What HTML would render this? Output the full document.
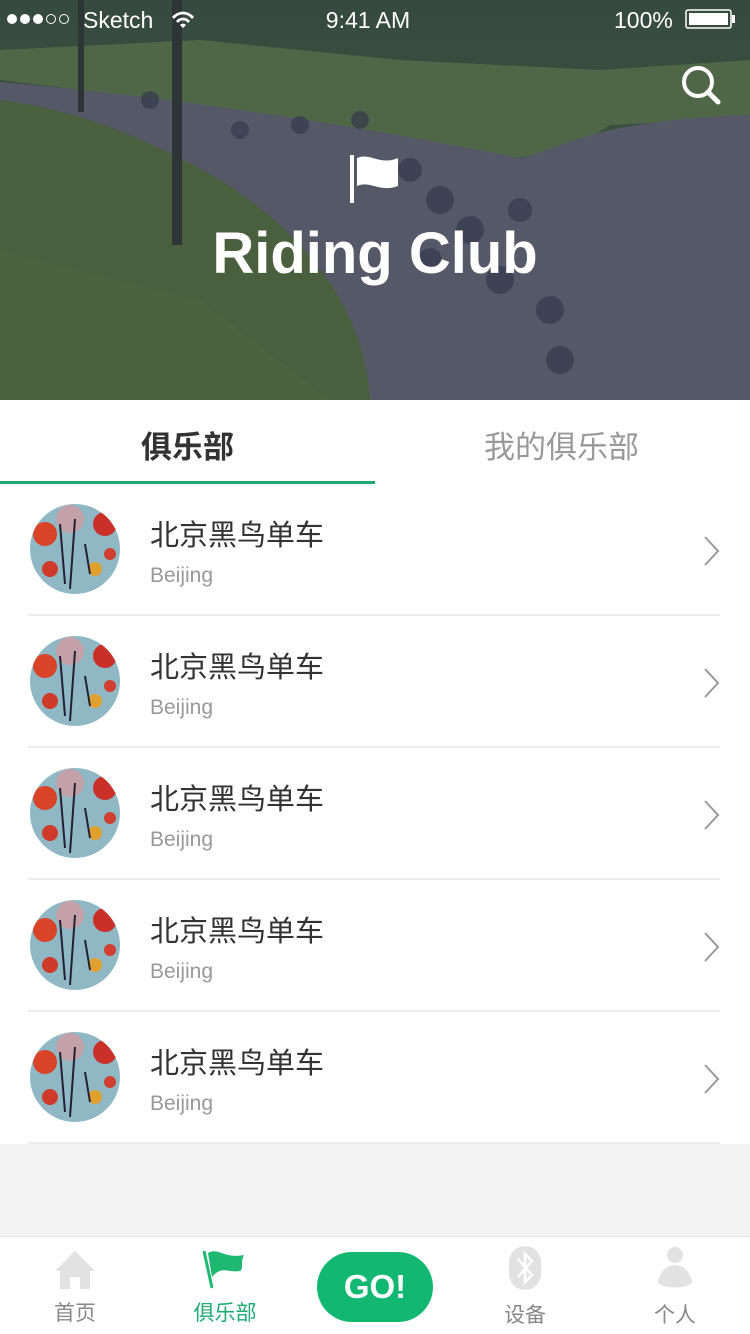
<!DOCTYPE html>
<html><head><meta charset="utf-8"><style>
*{margin:0;padding:0;box-sizing:border-box}
body{width:750px;height:1334px;background:#f4f4f4;font-family:"Liberation Sans","Noto Sans CJK SC",sans-serif;position:relative;overflow:hidden}
.hdr{position:absolute;left:0;top:0;width:750px;height:400px}
.tabs{position:absolute;top:400px;left:0;width:750px;height:84px;background:#fff}
.tab{position:absolute;top:22px;font-size:31px}
.row{position:absolute;left:0;width:750px;height:132px;background:#fff}
.row .sep{position:absolute;left:28px;right:30px;bottom:0;height:2px;background:#ececec}
.av{position:absolute;left:30px;top:20px;width:90px;height:90px;border-radius:50%;overflow:hidden}
.nm{position:absolute;left:150px;top:28px;font-size:29px;color:#333}
.sub{position:absolute;left:150px;top:80px;font-size:21px;color:#999}
.chev{position:absolute;left:700px;top:50px}
.bar{position:absolute;left:0;top:1236px;width:750px;height:98px;background:#fff;border-top:1px solid #e6e6e6}
.lbl{position:absolute;top:60px;font-size:21px;color:#888;width:100px;text-align:center}
</style></head><body>
<svg class="hdr" viewBox="0 0 750 400">
<defs>
<linearGradient id="tr" x1="0" y1="0" x2="0" y2="1"><stop offset="0" stop-color="#364a40"/><stop offset="1" stop-color="#43593f"/></linearGradient>
</defs>
<rect width="750" height="400" fill="url(#tr)"/>
<path d="M0 80 L200 105 L500 160 L570 150 L610 125 L750 118 L750 60 L600 70 L400 60 L200 40 L0 50Z" fill="#4f6746"/>
<path d="M0 82 C150 95 330 120 520 158 C560 150 590 120 750 115 L750 400 L370 400 C365 330 330 250 220 180 C150 140 80 110 0 100Z" fill="#555867"/>
<path d="M0 100 C80 110 150 140 220 180 C330 250 365 330 370 400 L0 400Z" fill="#4a5f3e"/>
<path d="M0 250 L200 300 L330 400 L0 400Z" fill="#4c663f" opacity=".6"/>
<rect x="172" y="0" width="10" height="245" fill="#2e3536"/>
<rect x="78" y="0" width="6" height="112" fill="#2e3536"/>
<g fill="#343a4e" opacity=".7"><circle cx="150" cy="100" r="9"/><circle cx="240" cy="130" r="9"/><circle cx="300" cy="125" r="9"/><circle cx="360" cy="120" r="9"/><circle cx="410" cy="170" r="12"/><circle cx="440" cy="200" r="14"/><circle cx="470" cy="230" r="14"/><circle cx="500" cy="280" r="14"/><circle cx="550" cy="310" r="14"/><circle cx="560" cy="360" r="14"/><circle cx="430" cy="260" r="12"/><circle cx="520" cy="210" r="12"/></g>
<rect x="350" y="155" width="4" height="48" fill="#fff"/>
<path d="M357 158 C370 152 380 166 398 158 L398 186 C380 193 370 180 357 186Z" fill="#fff"/>
<text x="375" y="273" text-anchor="middle" font-family="Liberation Sans" font-weight="bold" font-size="58" fill="#fff">Riding Club</text>
<circle cx="698" cy="82" r="14" fill="none" stroke="#fff" stroke-width="4"/>
<line x1="708" y1="92" x2="718" y2="102" stroke="#fff" stroke-width="5" stroke-linecap="round"/>
<g fill="#fff" font-family="Liberation Sans" font-size="23">
<circle cx="12" cy="19" r="5"/><circle cx="25" cy="19" r="5"/><circle cx="38" cy="19" r="5"/>
<circle cx="51" cy="19" r="4.5" fill="none" stroke="#fff" stroke-width="1"/><circle cx="64" cy="19" r="4.5" fill="none" stroke="#fff" stroke-width="1"/>
<text x="83" y="28">Sketch</text>
<path d="M172 17 a14 14 0 0 1 22 0 l-2 2 a11 11 0 0 0 -18 0z M176 21 a9 9 0 0 1 14 0 l-2 2 a6 6 0 0 0 -10 0z M180 25 l3 3 l3 -3 a4 4 0 0 0 -6 0z"/>
<text x="368" y="28" text-anchor="middle">9:41 AM</text>
<text x="614" y="28">100%</text>
<rect x="686" y="10" width="45" height="18" rx="2" fill="none" stroke="#fff" stroke-width="1.5"/>
<rect x="689" y="13" width="39" height="12"/>
<rect x="732" y="15" width="3" height="8"/>
</g>
</svg>
<div class="tabs">
<div class="tab" style="left:141px;color:#333;font-weight:bold">俱乐部</div>
<div class="tab" style="left:484px;color:#999">我的俱乐部</div>
<div style="position:absolute;left:0;top:81px;width:375px;height:3px;background:#1eaa72"></div>
</div>
<div id="rows"></div>
<script>
var h='';for(var i=0;i<5;i++){h+='<div class="row" style="top:'+(484+i*132)+'px"><div class="av"><svg width="90" height="90"><rect width="90" height="90" fill="#8fb8c4"/><circle cx="15" cy="30" r="12" fill="#d8432a"/><circle cx="75" cy="20" r="12" fill="#c9302a"/><circle cx="40" cy="15" r="14" fill="#c4a0a8"/><circle cx="20" cy="65" r="8" fill="#d03a2a"/><circle cx="65" cy="65" r="7" fill="#e0a030"/><circle cx="80" cy="50" r="6" fill="#d04030"/><path d="M30 20 L35 80 M45 15 L40 85 M55 40 L60 70" stroke="#223" stroke-width="2"/></svg></div><div class="nm">北京黑鸟单车</div><div class="sub">Beijing</div><svg class="chev" width="22" height="34"><path d="M5 3 L18 17 L5 31" fill="none" stroke="#999" stroke-width="2"/></svg><div class="sep"></div></div>'}
document.getElementById('rows').innerHTML=h;
</script>
<div class="bar">
<svg style="position:absolute;left:54px;top:12px" width="42" height="42"><path d="M21 2 L41 22 L36 22 L36 40 L26 40 L26 28 L16 28 L16 40 L6 40 L6 22 L1 22Z" fill="#e2e2e2"/></svg>
<div class="lbl" style="left:25px">首页</div>
<svg style="position:absolute;left:200px;top:10px" width="48" height="44"><path d="M4 4 L12 41" stroke="#1eb872" stroke-width="3"/><path d="M8 6 C18 0 24 12 44 8 C40 16 44 22 40 24 C28 26 22 18 12 30Z" fill="#1eb872"/></svg>
<div class="lbl" style="left:175px;color:#1eaa72">俱乐部</div>
<div style="position:absolute;left:317px;top:15px;width:116px;height:70px;border-radius:35px;background:#12b871;color:#fff;font-weight:bold;font-size:33px;text-align:center;line-height:70px">GO!</div>
<svg style="position:absolute;left:507px;top:8px" width="36" height="46"><rect x="2" y="1" width="32" height="44" rx="16" fill="#e2e2e2"/><path d="M11 14 L25 30 L18 37 L18 9 L25 16 L11 32" fill="none" stroke="#fff" stroke-width="2.5"/></svg>
<div class="lbl" style="left:475px;top:62px">设备</div>
<svg style="position:absolute;left:656px;top:8px" width="38" height="46"><circle cx="19" cy="10" r="8" fill="#e2e2e2"/><path d="M19 20 C8 20 2 32 2 38 C8 44 30 44 36 38 C36 32 30 20 19 20Z" fill="#e2e2e2"/></svg>
<div class="lbl" style="left:625px;top:62px">个人</div>
</div>
</body></html>
